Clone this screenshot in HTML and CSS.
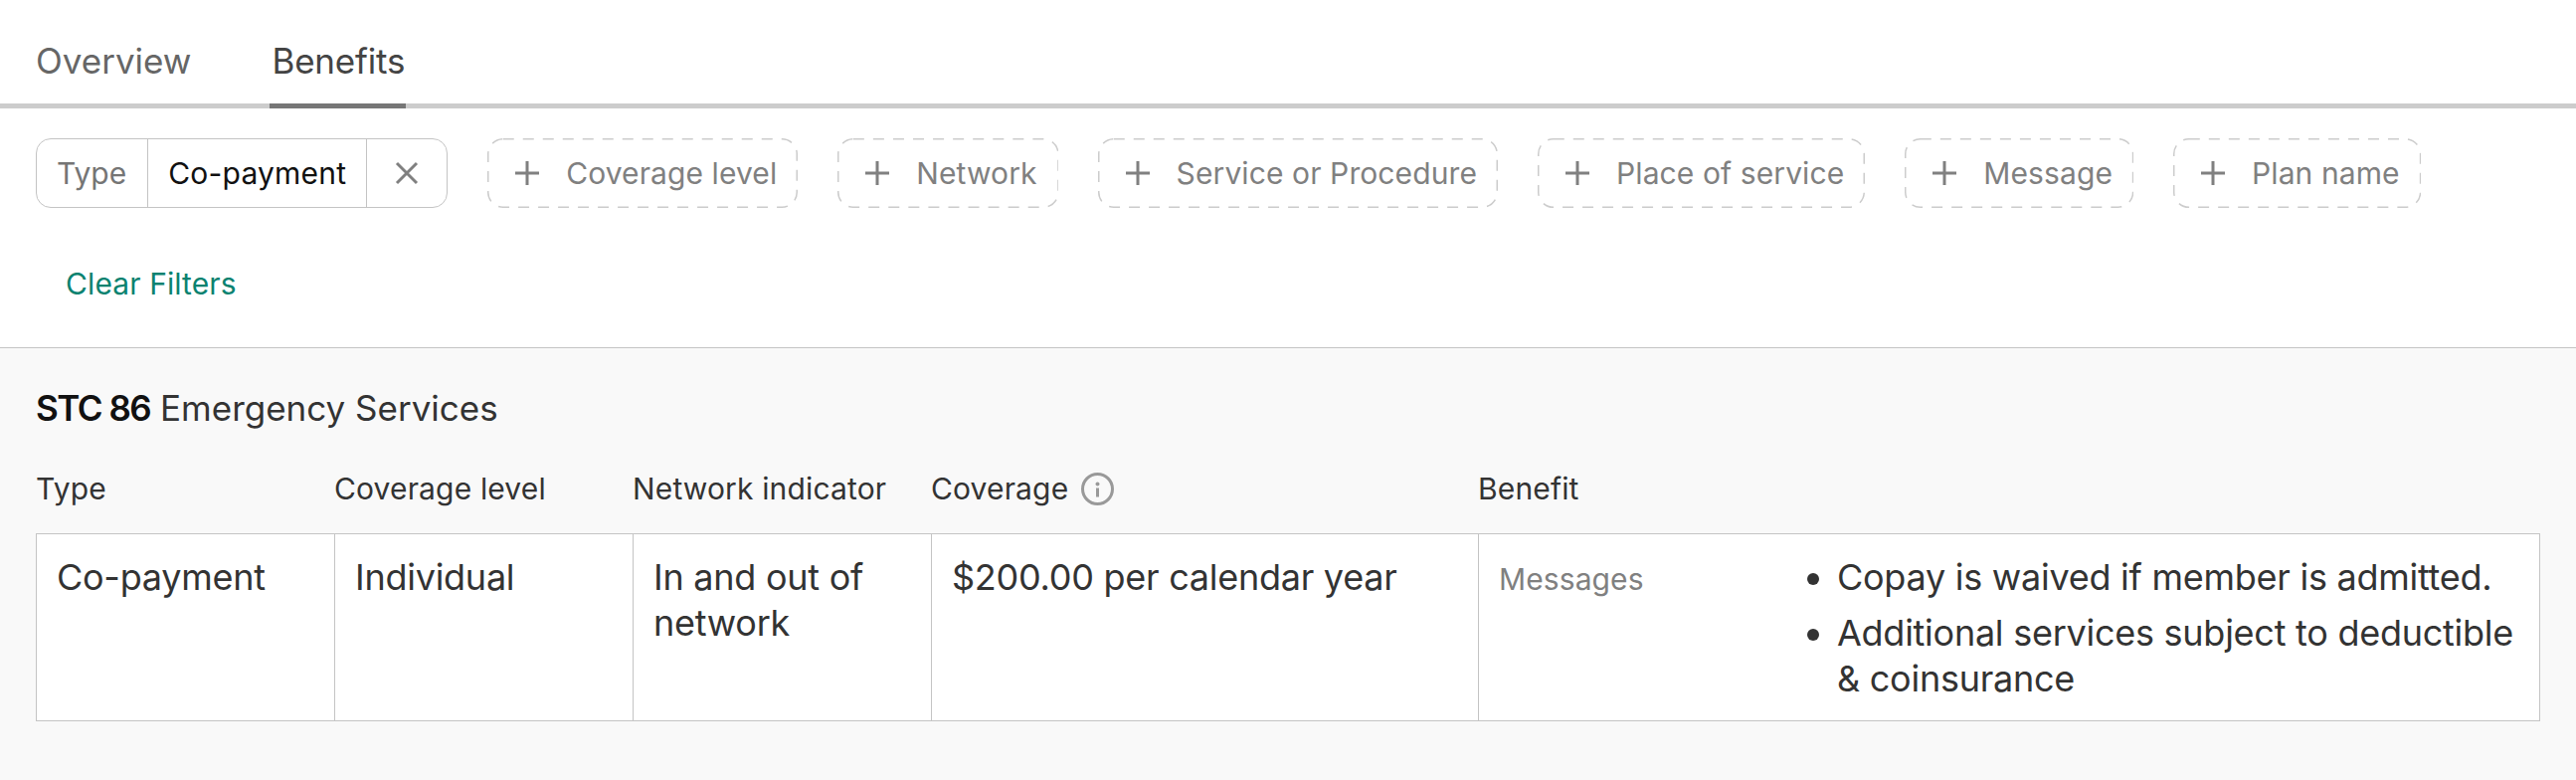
FILE: index.html
```html
<!DOCTYPE html>
<html lang="en">
<head>
    <meta charset="UTF-8">
    <meta name="viewport" content="width=device-width, initial-scale=1.0">
    <title>Benefits</title>
    <link rel="stylesheet" href="styles.css">
</head>
<body>
    <nav class="tabs">
        <a class="tab">Overview</a>
        <a class="tab active">Benefits</a>
    </nav>

    <section class="filters">
        <div class="chip">
            <span class="chip-label">Type</span>
            <span class="chip-value">Co-payment</span>
            <span class="chip-close">
                <svg width="24" height="24" viewBox="0 0 24 24"><path d="M2 2 L22 22 M22 2 L2 22" /></svg>
            </span>
        </div>
        <button class="add-filter"><svg width="24" height="24" viewBox="0 0 24 24"><path d="M12 0 V24 M0 12 H24" /></svg>Coverage level</button>
        <button class="add-filter"><svg width="24" height="24" viewBox="0 0 24 24"><path d="M12 0 V24 M0 12 H24" /></svg>Network</button>
        <button class="add-filter"><svg width="24" height="24" viewBox="0 0 24 24"><path d="M12 0 V24 M0 12 H24" /></svg>Service or Procedure</button>
        <button class="add-filter"><svg width="24" height="24" viewBox="0 0 24 24"><path d="M12 0 V24 M0 12 H24" /></svg>Place of service</button>
        <button class="add-filter"><svg width="24" height="24" viewBox="0 0 24 24"><path d="M12 0 V24 M0 12 H24" /></svg>Message</button>
        <button class="add-filter"><svg width="24" height="24" viewBox="0 0 24 24"><path d="M12 0 V24 M0 12 H24" /></svg>Plan name</button>
    </section>

    <div class="clear-row"><a class="clear-link">Clear Filters</a></div>

    <main class="results">
        <h2 class="stc-title"><b>STC 86</b> Emergency Services</h2>

        <div class="grid-head">
            <div>Type</div>
            <div>Coverage level</div>
            <div>Network indicator</div>
            <div class="with-icon">Coverage
                <svg width="33" height="33" viewBox="0 0 33 33">
                    <circle cx="16.5" cy="16.5" r="15" />
                    <circle class="dot" cx="16.5" cy="11.5" r="2" />
                    <path d="M16.5 15.5 V24.5" />
                </svg>
            </div>
            <div>Benefit</div>
        </div>

        <div class="grid-row">
            <div class="cell">Co-payment</div>
            <div class="cell">Individual</div>
            <div class="cell">In and out of network</div>
            <div class="cell">$200.00 per calendar year</div>
            <div class="cell benefit">
                <span class="messages-label">Messages</span>
                <ul class="messages">
                    <li>Copay is waived if member is admitted.</li>
                    <li>Additional services subject to deductible &amp; coinsurance</li>
                </ul>
            </div>
        </div>
    </main>
</body>
</html>
```

FILE: styles.css
```css
* {
    box-sizing: border-box;
}

body {
    margin: 0;
    height: 784px;
    display: flex;
    flex-direction: column;
    font-family: Inter, "Liberation Sans", sans-serif;
    color: #333;
    background: #fff;
}

.tabs {
    display: flex;
    gap: 79px;
    height: 109px;
    padding: 0 36px;
    border-bottom: 5px solid #ccc;
}

.tab {
    height: 109px;
    padding-top: 39px;
    font-size: 35px;
    line-height: 44px;
    color: #666;
    border-bottom: 5px solid transparent;
}

.tab.active {
    color: #444;
    padding: 39px 1px 0 2px;
    letter-spacing: -0.2px;
    border-bottom-color: #767676;
}

.filters {
    display: flex;
    gap: 40px;
    padding: 30px 36px 0;
}

.chip {
    display: flex;
    height: 70px;
    border: 1px solid #c4c4c4;
    border-radius: 15px;
    font-size: 30px;
    line-height: 68px;
}

.chip-label {
    padding: 0 21px 0 20px;
    color: #757575;
    border-right: 1px solid #c4c4c4;
}

.chip-value {
    padding: 0 20px;
    color: #111;
    letter-spacing: 0.2px;
    border-right: 1px solid #c4c4c4;
}

.chip-close {
    display: flex;
    align-items: center;
    padding: 0 28px;
}

.chip-close svg path,
.add-filter svg path {
    stroke: #808080;
    stroke-width: 3;
    fill: none;
}

/* dashes are longer than a css dashed border draws them */
.add-filter {
    display: flex;
    align-items: center;
    gap: 27px;
    height: 70px;
    padding: 0 21px 0 28px;
    border: none;
    background: url("data:image/svg+xml,%3Csvg xmlns='http://www.w3.org/2000/svg' width='100%25' height='100%25'%3E%3Crect x='.75' y='.75' width='calc(100%25 - 1.5px)' height='calc(100%25 - 1.5px)' rx='15' fill='none' stroke='%23ccc' stroke-width='1.5' stroke-dasharray='11 9'/%3E%3C/svg%3E");
    font-family: inherit;
    font-size: 30px;
    letter-spacing: 0.1px;
    color: #808080;
}

.clear-row {
    height: 140px;
    padding: 56px 66px 0;
}

.clear-link {
    font-size: 30px;
    line-height: 40px;
    letter-spacing: 0.1px;
    color: #0a8270;
}

.results {
    flex: 1;
    padding: 0 36px;
    background: #f9f9f9;
    border-top: 1px solid #c4c4c4;
}

.stc-title {
    margin: 39px 0 0;
    font-size: 35px;
    line-height: 42px;
    font-weight: 400;
    color: #333;
}

.stc-title b {
    font-weight: 600;
    color: #111;
    letter-spacing: -1.5px;
}

.grid-head,
.grid-row {
    display: grid;
    grid-template-columns: 300px 300px 300px 550px 1fr;
}

.grid-head {
    margin-top: 40px;
    height: 65px;
    font-size: 30px;
    line-height: 40px;
    letter-spacing: 0.15px;
}

.with-icon {
    display: flex;
    align-items: flex-start;
    gap: 13px;
}

.with-icon svg {
    margin-top: 4px;
}

.with-icon svg circle {
    fill: none;
    stroke: #999;
    stroke-width: 3;
}

.with-icon svg .dot {
    fill: #999;
    stroke: none;
}

.with-icon svg path {
    stroke: #999;
    stroke-width: 3;
}

.grid-row {
    height: 189px;
    background: #fff;
    border: 1px solid #c4c4c4;
}

.cell {
    padding: 20px 20px 0;
    font-size: 36px;
    line-height: 46px;
    letter-spacing: -0.26px;
    border-right: 1px solid #c4c4c4;
}

.cell:last-child {
    border-right: none;
}

.benefit {
    display: flex;
}

.messages-label {
    flex: 0 0 300px;
    padding-top: 2px;
    font-size: 30px;
    letter-spacing: 0.1px;
    color: #808080;
}

.messages {
    margin: 0;
    padding: 0 0 0 40px;
}

.messages li + li {
    margin-top: 10px;
}
```
